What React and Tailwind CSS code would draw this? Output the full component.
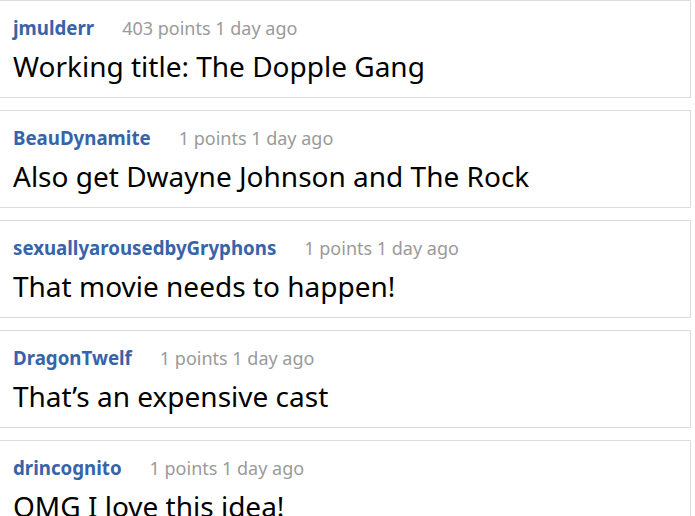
const COMMENTS = [
  { user: 'jmulderr', points: 403, text: 'Working title: The Dopple Gang' },
  { user: 'BeauDynamite', points: 1, text: 'Also get Dwayne Johnson and The Rock' },
  { user: 'sexuallyarousedbyGryphons', points: 1, text: 'That movie needs to happen!' },
  { user: 'DragonTwelf', points: 1, text: 'That\u2019s an expensive cast' },
  { user: 'drincognito', points: 1, text: 'OMG I love this idea!' },
]

function Comment({ c }) {
  return (
    <div className="w-[691px] shrink-0 bg-white border-t border-r border-b border-[#dcdcdc] pl-[13px] pt-[15px] pb-[13px]">
      <div className="flex items-center leading-6">
        <span className="text-[18.7px] font-bold text-[#3763a8]">{c.user}</span>
        <span className="ml-7 text-[18px] text-[#9a9a9a]">{c.points} points 1 day ago</span>
      </div>
      <p className="mt-2 text-[28px] leading-9 text-black whitespace-nowrap">{c.text}</p>
    </div>
  )
}

export default function App() {
  return (
    <div className="h-[516px] overflow-hidden bg-white font-['Noto_Sans',sans-serif] flex flex-col gap-3">
      {COMMENTS.map((c) => (
        <Comment key={c.user} c={c} />
      ))}
    </div>
  )
}
